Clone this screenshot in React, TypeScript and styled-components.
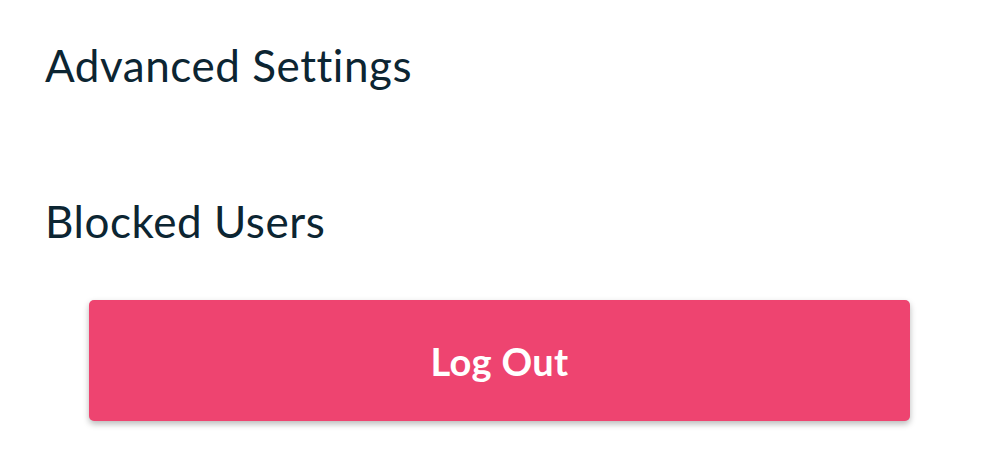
import React from "react";
import styled, { createGlobalStyle } from "styled-components";

const GlobalStyle = createGlobalStyle`
  html, body {
    margin: 0;
    padding: 0;
    background: #ffffff;
  }
  body {
    font-family: Lato, "Open Sans", sans-serif;
  }
`;

const Page = styled.div`
  width: 999px;
  height: 467px;
  box-sizing: border-box;
  display: flex;
  flex-direction: column;
  background: #ffffff;
`;

const SettingsList = styled.ul`
  list-style: none;
  margin: 0;
  padding: 0;
  display: flex;
  flex-direction: column;
`;

const SettingItem = styled.li`
  height: 156px;
  box-sizing: border-box;
  padding: 39px 45px 0;
  font-size: 44px;
  line-height: 52px;
  color: #0c2532;
  letter-spacing: 0.55px;
  &:last-child {
    height: 104px;
  }
`;

const ButtonRow = styled.div`
  display: flex;
  justify-content: center;
  padding-top: 40px;
`;

const LogOutButton = styled.button`
  width: 821px;
  height: 121px;
  border: none;
  border-radius: 5px;
  background: #ee4470;
  color: #ffffff;
  font-family: Lato, "Open Sans", sans-serif;
  font-size: 38px;
  font-weight: 700;
  letter-spacing: 0.3px;
  box-shadow: 0 3px 6px rgba(0, 0, 0, 0.28);
  cursor: pointer;
`;

export default function App() {
  return (
    <>
      <GlobalStyle />
      <Page>
        <SettingsList>
          <SettingItem>Advanced Settings</SettingItem>
          <SettingItem>Blocked Users</SettingItem>
        </SettingsList>
        <ButtonRow>
          <LogOutButton>Log Out</LogOutButton>
        </ButtonRow>
      </Page>
    </>
  );
}
